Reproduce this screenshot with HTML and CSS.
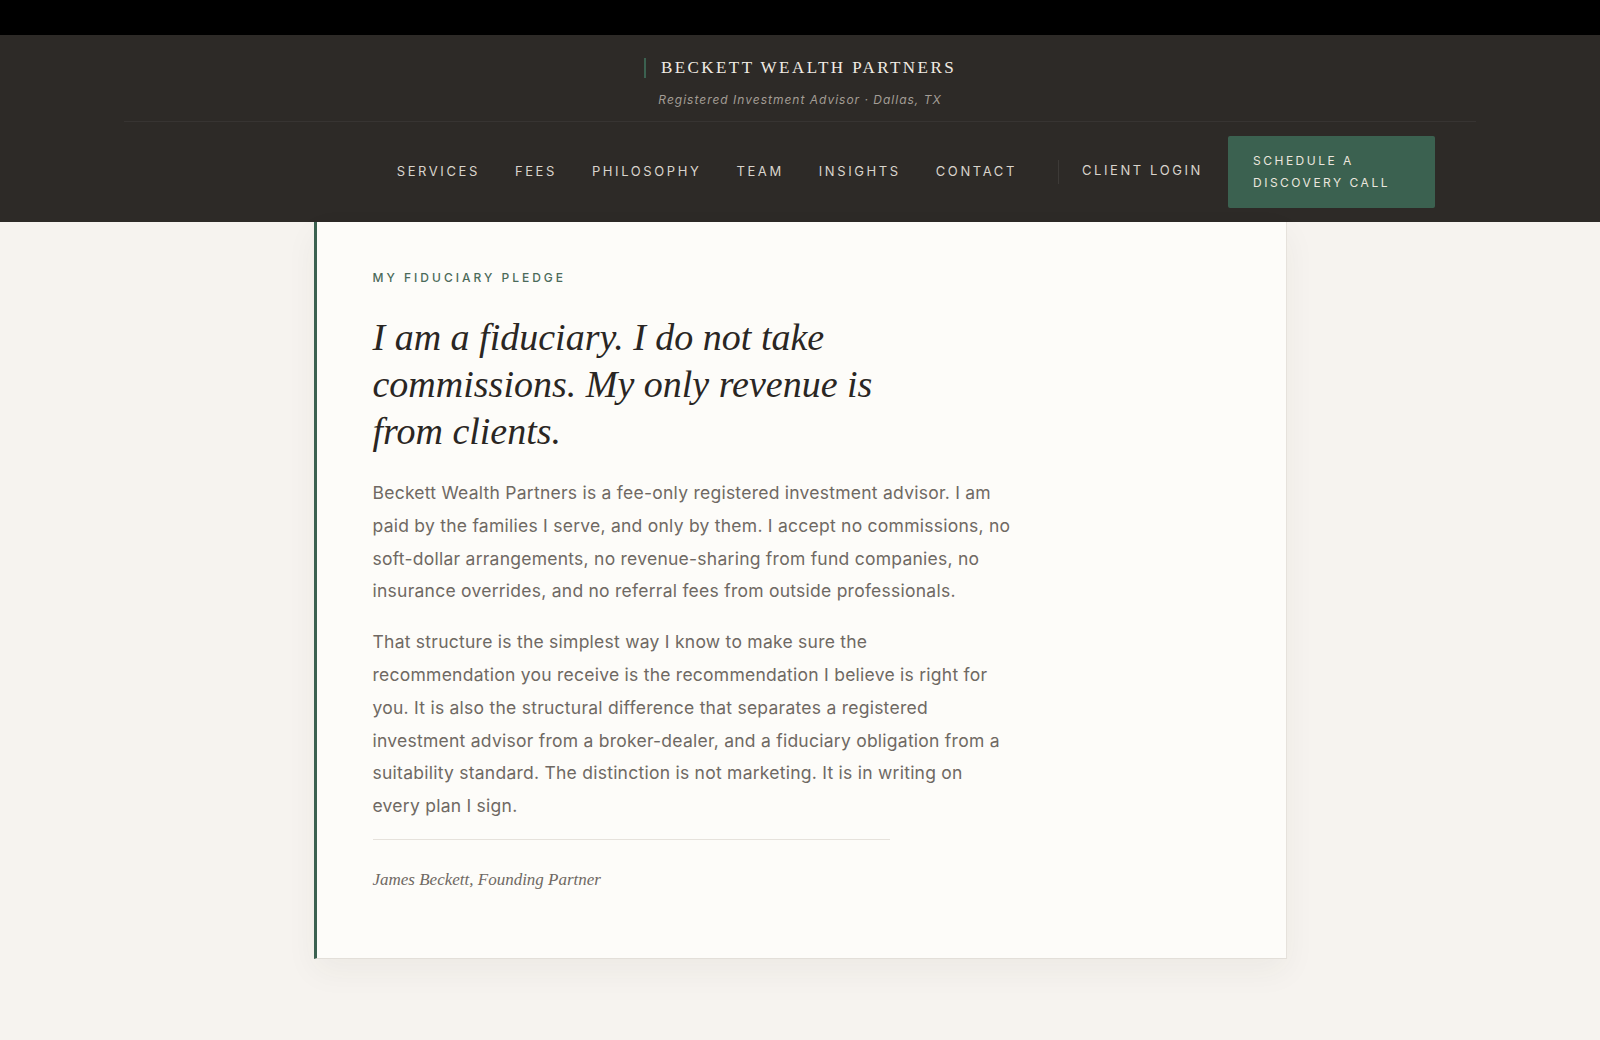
FILE: index.html
```html
<!DOCTYPE html>
<html lang="en">
<head>
<meta charset="utf-8">
<title>Beckett Wealth Partners — My Fiduciary Pledge</title>
<link rel="stylesheet" href="styles.css">
</head>
<body>
<div class="topbar"></div>
<header class="site-header">
  <div class="header-inner">
    <div class="brand">
      <div class="brand-name"><span class="brand-mark"></span><span class="brand-text">Beckett Wealth Partners</span></div>
      <div class="brand-sub">Registered Investment Advisor · Dallas, TX</div>
    </div>
    <nav class="nav">
      <ul class="nav-links">
        <li><a href="#">Services</a></li>
        <li><a href="#">Fees</a></li>
        <li><a href="#">Philosophy</a></li>
        <li><a href="#">Team</a></li>
        <li><a href="#">Insights</a></li>
        <li><a href="#">Contact</a></li>
      </ul>
      <span class="nav-sep"></span>
      <a class="nav-login" href="#">Client Login</a>
      <a class="nav-cta" href="#">Schedule a Discovery Call</a>
    </nav>
  </div>
</header>
<main class="page">
  <article class="pledge">
    <p class="eyebrow">My Fiduciary Pledge</p>
    <h1 class="pledge-title">I am a fiduciary. I do not take commissions. My only revenue is from clients.</h1>
    <p class="pledge-body">Beckett Wealth Partners is a fee-only registered investment advisor. I am paid by the families I serve, and only by them. I accept no commissions, no soft-dollar arrangements, no revenue-sharing from fund companies, no insurance overrides, and no referral fees from outside professionals.</p>
    <p class="pledge-body pledge-body-last">That structure is the simplest way I know to make sure the recommendation you receive is the recommendation I believe is right for you. It is also the structural difference that separates a registered investment advisor from a broker-dealer, and a fiduciary obligation from a suitability standard. The distinction is not marketing. It is in writing on every plan I sign.</p>
    <hr class="pledge-rule">
    <p class="signature">James Beckett, Founding Partner</p>
  </article>
</main>
</body>
</html>
```

FILE: styles.css
```css
* { box-sizing: border-box; }

html, body {
  margin: 0;
  padding: 0;
}

body {
  background: #f6f3ef;
  font-family: "Inter", "Liberation Sans", sans-serif;
  color: #6f6963;
  min-height: 1040px;
}

.topbar {
  height: 35px;
  background: #000;
}

.site-header {
  background: #2d2a27;
}

.header-inner {
  max-width: 1352px;
  margin: 0 auto;
}

.brand {
  padding: 21px 0 12px;
  border-bottom: 1px solid rgba(255, 255, 255, 0.05);
  text-align: center;
}

.brand-name {
  display: flex;
  justify-content: center;
  align-items: center;
  gap: 15px;
  height: 24px;
}

.brand-mark {
  width: 2px;
  height: 20px;
  background: #3b6150;
}

.brand-text {
  font-family: "Liberation Serif", "DejaVu Serif", serif;
  font-size: 17px;
  letter-spacing: 2.45px;
  text-transform: uppercase;
  color: #f1ece4;
  line-height: 24px;
}

.brand-sub {
  margin-top: 11px;
  font-size: 12px;
  line-height: 18px;
  font-style: italic;
  letter-spacing: 1px;
  color: #a39d95;
}

.nav {
  display: flex;
  justify-content: flex-end;
  align-items: center;
  height: 100px;
  padding-right: 41px;
}

.nav-links {
  display: flex;
  gap: 35px;
  list-style: none;
  margin: 0;
  padding: 0 0 5px;
}

.nav a {
  text-decoration: none;
  text-transform: uppercase;
  font-size: 13px;
  letter-spacing: 2.6px;
  color: #d9d4cc;
}

.nav .nav-login {
  padding-bottom: 5px;
}

.nav-sep {
  width: 1px;
  height: 24px;
  background: rgba(255, 255, 255, 0.08);
  margin: 0 23px 0 41px;
}

.nav .nav-cta {
  display: block;
  width: 207px;
  margin-left: 25px;
  padding: 14px 25px;
  background: #3b6150;
  border-radius: 2px;
  font-size: 12px;
  letter-spacing: 2.5px;
  line-height: 22px;
  color: #ebe6de;
}

.page {
  padding-bottom: 82px;
}

.pledge {
  width: 973px;
  margin: 0 auto;
  background: #fdfcf9;
  border-left: 3px solid #3b6150;
  border-right: 1px solid #e6e2dc;
  border-bottom: 1px solid #e3dfd9;
  box-shadow: 0 12px 30px rgba(60, 50, 40, 0.05);
  padding: 47px 56px 65px;
}

.eyebrow {
  margin: 0;
  font-size: 12px;
  line-height: 18px;
  font-weight: 500;
  letter-spacing: 3px;
  text-transform: uppercase;
  color: #4b6a5a;
}

.pledge-title {
  margin: 27px 0 22px;
  max-width: 500px;
  font-family: "Liberation Serif", "DejaVu Serif", serif;
  font-style: italic;
  font-weight: 400;
  font-size: 38px;
  line-height: 47px;
  color: #2a2623;
}

.pledge-body {
  margin: 0 0 18px;
  max-width: 640px;
  font-size: 17.5px;
  letter-spacing: 0.25px;
  line-height: 32.8px;
  color: #6f6963;
}

.pledge-body-last {
  margin-bottom: 16px;
}

.pledge-rule {
  width: 517px;
  margin: 0;
  border: 0;
  border-top: 1px solid #e6e2dc;
}

.signature {
  margin: 27px 0 0;
  font-family: "Liberation Serif", "DejaVu Serif", serif;
  font-style: italic;
  font-size: 17px;
  line-height: 26px;
  color: #6f6963;
}
```
